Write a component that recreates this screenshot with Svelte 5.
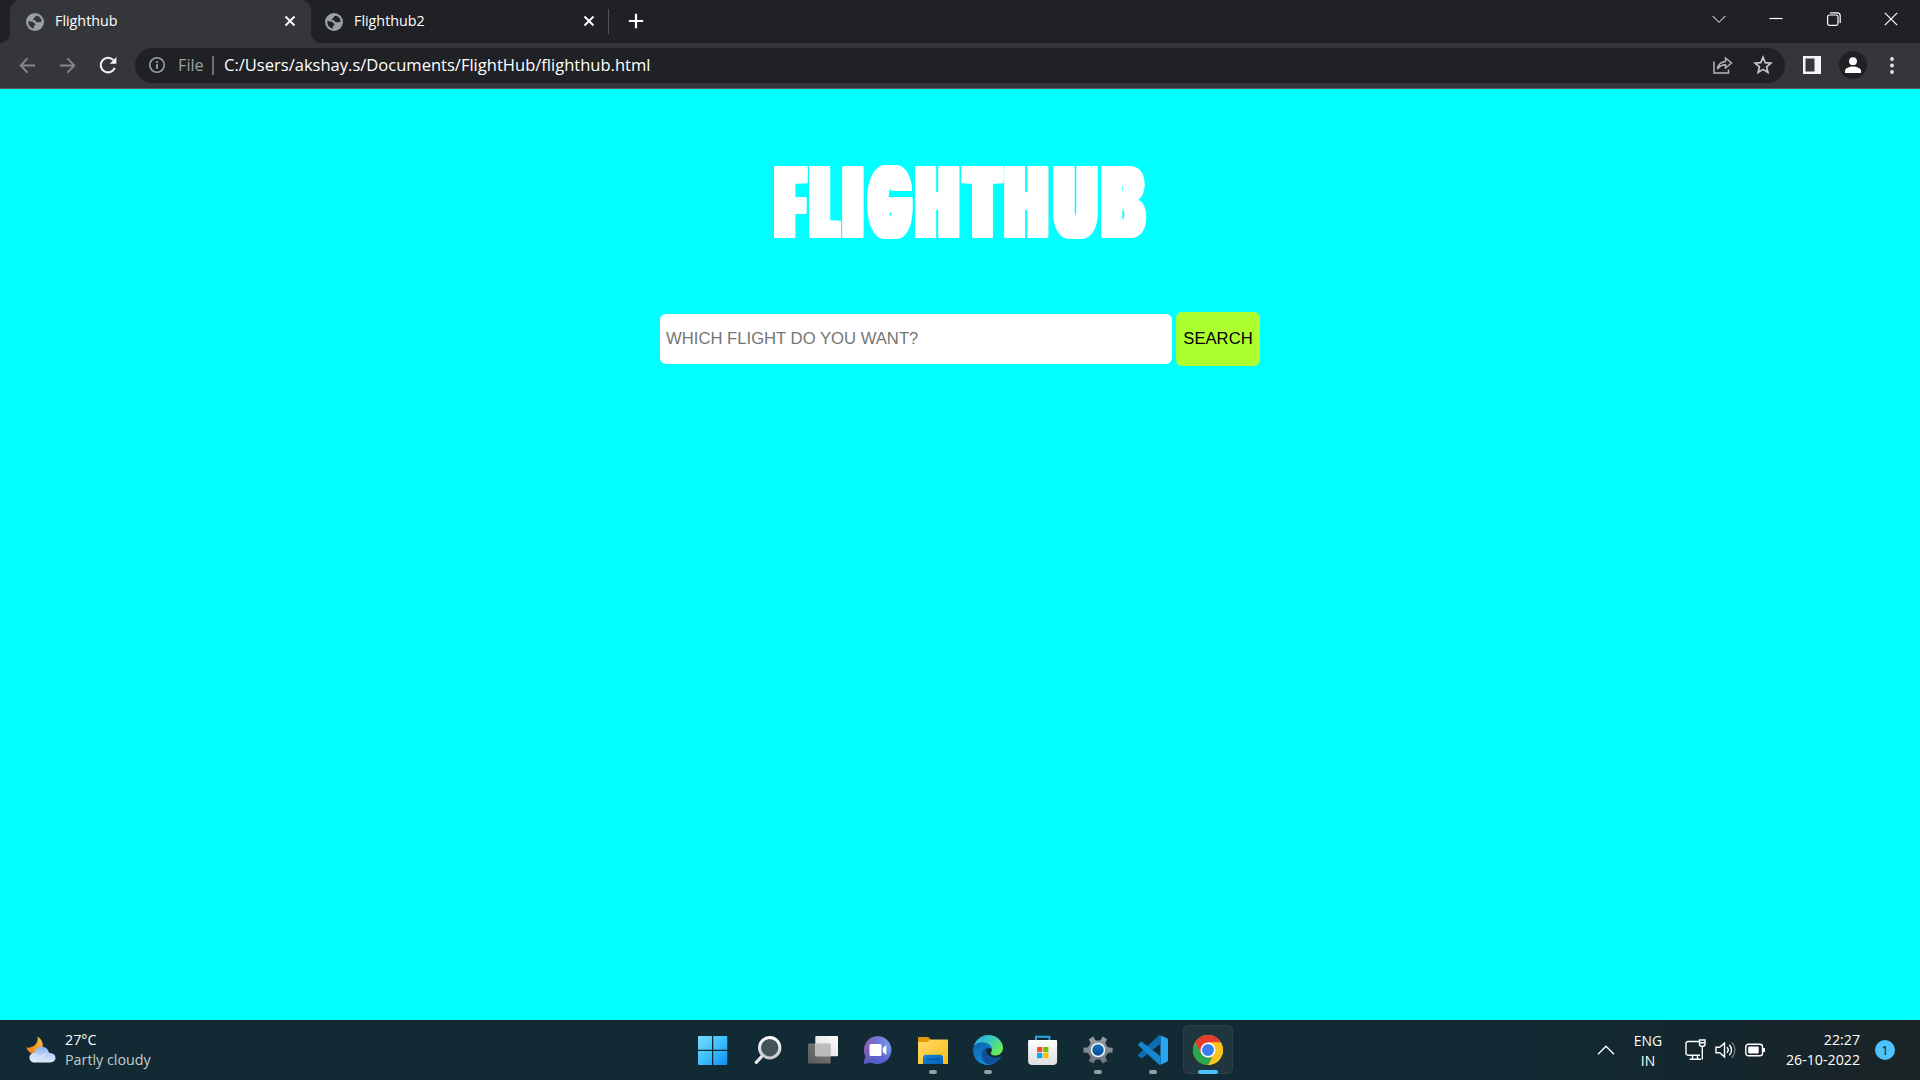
<script>
  // Each glyph of the wordmark: cell width, gap after it, left bearing,
  // horizontal scale and extra stem weight.
  const title = [
    { ch: 'F', w: 33.8, gap: 1, l: 4.2, s: 0.397, t: 13.2 },
    { ch: 'L', w: 32, gap: 0.9, l: 4.2, s: 0.372, t: 13.5 },
    { ch: 'I', w: 21.7, gap: 3.4, l: 4.2, s: 0.504, t: 11 },
    { ch: 'G', w: 45.3, gap: 3.2, l: 2.8, s: 0.504, t: 10.7 },
    { ch: 'H', w: 44.7, gap: 0.9, l: 4.2, s: 0.504, t: 10.9 },
    { ch: 'T', w: 42.5, gap: 0.6, l: 1.8, s: 0.498, t: 10.7 },
    { ch: 'H', w: 44.7, gap: 4, l: 4.2, s: 0.504, t: 10.9 },
    { ch: 'U', w: 44.7, gap: 3.4, l: 4, s: 0.54, t: 10.5 },
    { ch: 'B', w: 45.5, gap: 0, l: 4.2, s: 0.6, t: 8.9 }
  ].map((g) => ({ ...g, s: g.s / 0.96, l: g.l * 0.96 }));
  const tabs = [
    { name: 'Flighthub', active: true },
    { name: 'Flighthub2', active: false }
  ];
</script>

{#snippet globe()}
  <svg class="globe" viewBox="0 0 20 20"><circle cx="10" cy="10" r="10" fill="#9aa0a6" /><path class="land" d="M9 5.600l1.800-2.400 2-.2c2.700 1 4.500 3.600 4.600 6.400l-2.200.8h-3.600L10.300 8l-3-.3zM2.600 9l5 .7 2.600 2.200.3 1.300-1.900 1.400.2 2.700C5 16.800 2.400 13.800 2.600 9z" /></svg>
{/snippet}

<div class="screen">
  <header class="tabstrip">
    {#each tabs as tab}
      <div class="tab" class:active={tab.active}>
        {@render globe()}
        <span class="tabname">{tab.name}</span>
        <svg class="x" viewBox="0 0 12 12"><path d="M1.500 1.500l9 9M10.500 1.500l-9 9" stroke="#fff" stroke-width="1.900" /></svg>
      </div>
    {/each}
    <div class="sep"></div>
    <svg class="plus" viewBox="0 0 16 16"><path d="M8 .8v14.400M.8 8h14.400" stroke="#fff" stroke-width="2.200" /></svg>
    <div class="winctl">
      <svg class="thin" viewBox="0 0 14 14"><path d="M.7 4l6.300 6.300L13.300 4" /></svg>
      <svg viewBox="0 0 14 14"><path d="M.5 6.500h13" /></svg>
      <svg viewBox="0 0 14 14"><rect x=".6" y="3" width="10.400" height="10.400" rx="1.800" /><path d="M3 .9h7.300a2.900 2.900 0 0 1 2.900 2.900v7.300" /></svg>
      <svg viewBox="0 0 14 14"><path d="M.8.800l12.400 12.400M13.200.800L.8 13.200" /></svg>
    </div>
  </header>

  <div class="toolbar">
    <svg class="nav" viewBox="0 0 18 18"><path d="M17 9H2M9 1.500L1.800 9 9 16.500" stroke="#85878a" /></svg>
    <svg class="nav" viewBox="0 0 18 18"><path d="M1 9h15M9 1.500L16.200 9 9 16.500" stroke="#85878a" /></svg>
    <svg class="nav reload" viewBox="0 0 18 18"><path d="M15.800 11.800A7.300 7.300 0 1 1 14.300 4" stroke="#f1f3f4" stroke-width="2.100" /><path d="M17.400 1v6.700h-6.700z" fill="#f1f3f4" /></svg>
    <div class="omnibox">
      <svg class="info" viewBox="0 0 16 16"><circle cx="8" cy="8" r="7.200" fill="none" stroke="#9aa0a6" stroke-width="1.600" /><path d="M8 7.200v4.600M8 4.200V6" stroke="#9aa0a6" stroke-width="1.900" /></svg>
      <span class="file">File</span>
      <span class="bar"></span>
      <span class="url">C:/Users/akshay.s/Documents/FlightHub/flighthub.html</span>
      <svg class="share" viewBox="0 0 20 18"><path d="M1 5.500V17h14.500v-3.500M4.500 13C5 8.500 8 6 12.500 5.500V2l6 5-6 5V8.700C9 8.700 6.500 10 4.500 13z" fill="none" stroke="#b4b6b9" stroke-width="1.500" /></svg>
      <svg class="star" viewBox="0 0 20 20"><path d="M10 2.300l2.200 5.300 5.700.5-4.300 3.700 1.300 5.600-4.900-3-4.900 3 1.300-5.600L2.100 8.100l5.700-.5z" fill="none" stroke="#c4c6c9" stroke-width="1.700" /></svg>
    </div>
    <svg class="panel" viewBox="0 0 18 18"><path fill="#f1f3f4" fill-rule="evenodd" d="M0 0h18v18H0zM2.500 2.500v13h9v-13z" /></svg>
    <div class="avatar"><svg viewBox="0 0 16 16"><circle cx="8" cy="4.200" r="3.900" fill="#fff" /><path d="M0 16v-2c0-2.800 4.500-4.400 8-4.400s8 1.600 8 4.400v2z" fill="#fff" /></svg></div>
    <svg class="dots" viewBox="0 0 4 17" fill="#e3e4e6"><circle cx="2" cy="2" r="1.900" /><circle cx="2" cy="8.500" r="1.900" /><circle cx="2" cy="15" r="1.900" /></svg>
  </div>

  <main>
    <h1>{#each title as g}<span class="cell" style="width:{g.w}px;margin-right:{g.gap}px"><span class="glyph" style="--s:{g.s};--x:{g.t / 2 - g.l * g.s}px;--e:{g.t / 2 / g.s}px">{g.ch}</span></span>{/each}</h1>
    <div class="search">
      <input type="text" placeholder="WHICH FLIGHT DO YOU WANT?" />
      <button>SEARCH</button>
    </div>
  </main>

  <footer>
    <div class="weather">
      <svg viewBox="0 0 30 28">
        <defs>
          <linearGradient id="moon" x1="0" y1="1" x2="1" y2="0"><stop offset="0" stop-color="#f07b1d" /><stop offset="1" stop-color="#f9c23c" /></linearGradient>
          <linearGradient id="cloud" x1="0" y1="0" x2="0" y2="1"><stop offset="0" stop-color="#8fb4ee" /><stop offset="1" stop-color="#dde8fb" /></linearGradient>
        </defs>
        <path d="M11.500.5c4 2.500 6.200 6.800 5 11.500-1 3.500-4 6-7.500 6C5 18 1.500 15.500.5 11.500 6.500 12.500 13 8 11.500.5z" fill="url(#moon)" />
        <path d="M9 26.500c-3.200 0-5.500-2-5.500-4.800 0-2.900 2.200-4.900 5-4.900.8-3.600 3.600-6 7.300-6 3.900 0 6.800 2.500 7.300 6.300 3.700-.1 6.400 1.700 6.400 4.700 0 2.800-2.300 4.700-5.500 4.700z" fill="url(#cloud)" />
        <path d="M9 26.500c-3.200 0-5.500-2-5.500-4.800 0-2.500 2-4.500 4.500-4.700 3 0 5 2 6 3 2-2.500 6-3 9-2.900" fill="#e8f0ff" opacity=".4" />
      </svg>
      <div><p>27°C</p><p class="dim">Partly cloudy</p></div>
    </div>

    <div class="apps">
      <div class="app">
        <svg viewBox="0 0 30 30"><defs><linearGradient id="win" gradientUnits="userSpaceOnUse" x1="0" y1="0" x2="30" y2="30"><stop offset="0" stop-color="#7bdcff" /><stop offset=".5" stop-color="#3fc0fb" /><stop offset="1" stop-color="#0a8cf5" /></linearGradient></defs><path fill="url(#win)" d="M0 1.700a.8.8 0 0 1 .8-.8h13.200v13.800H0zM15.300.9h13.200a.8.8 0 0 1 .8.8v13H15.300zM0 16h14v13.900H.8a.8.8 0 0 1-.8-.8zM15.300 16h14v13.100a.8.8 0 0 1-.8.800H15.300z" /></svg>
      </div>
      <div class="app">
        <svg viewBox="0 0 30 30"><defs><linearGradient id="lens" x1="0" y1="0" x2="0" y2="1"><stop offset="0" stop-color="#fff" /><stop offset="1" stop-color="#c4c8ca" /></linearGradient></defs><path d="M10 20L3.300 27.400" stroke="#e2e4e5" stroke-width="3.200" stroke-linecap="round" /><circle cx="16.700" cy="12.700" r="10.200" fill="#42545b" stroke="url(#lens)" stroke-width="3" /></svg>
      </div>
      <div class="app">
        <svg viewBox="0 0 30 30"><defs><linearGradient id="tv1" x1="0" y1="1" x2="1" y2="0"><stop offset="0" stop-color="#d8d8d8" /><stop offset="1" stop-color="#fff" /></linearGradient><linearGradient id="tv2" x1="0" y1="1" x2="1" y2="0"><stop offset="0" stop-color="#5a5a5a" /><stop offset="1" stop-color="#7e7e7e" /></linearGradient></defs><rect x="0" y="8.500" width="22.700" height="20" rx="1" fill="url(#tv2)" /><rect x="7.300" y="1" width="22.700" height="20.300" rx="1" fill="url(#tv1)" /><path d="M7.300 8.500h14.400a1 1 0 0 1 1 1v11.800H8.300a1 1 0 0 1-1-1z" fill="#bcbcbc" /></svg>
      </div>
      <div class="app">
        <svg viewBox="0 0 30 30"><defs><linearGradient id="chat" x1=".1" y1=".3" x2="1" y2=".2"><stop offset="0" stop-color="#8a5fb5" /><stop offset=".5" stop-color="#7377d8" /><stop offset="1" stop-color="#6fa0ea" /></linearGradient><linearGradient id="chat2" x1="0" y1="0" x2="0" y2="1"><stop offset=".4" stop-color="#5059c9" stop-opacity="0" /><stop offset="1" stop-color="#5059c9" /></linearGradient></defs><path d="M14.800.9a14 14 0 1 1-6.500 26.600L.8 28.800l1.600-7.500A14 14 0 0 1 14.800.9z" fill="url(#chat)" /><path d="M14.800.9a14 14 0 1 1-6.500 26.600L.8 28.800l1.600-7.500A14 14 0 0 1 14.800.9z" fill="url(#chat2)" /><rect x="6.500" y="9" width="12" height="12" rx="1.500" fill="#fff" /><path d="M19.800 13.200l2.700-2.700c.4-.4.900-.2.900.4v8.200c0 .6-.5.800-.9.400l-2.700-2.700z" fill="#fff" /></svg>
      </div>
      <div class="app">
        <svg viewBox="0 0 30 30"><defs><linearGradient id="fold" x1="0" y1="0" x2="1" y2="1"><stop offset="0" stop-color="#ffda6b" /><stop offset="1" stop-color="#fbbd16" /></linearGradient><linearGradient id="foldb" x1="0" y1="0" x2="1" y2="1"><stop offset="0" stop-color="#1583d8" /><stop offset="1" stop-color="#0563b5" /></linearGradient></defs><path d="M0 3a1 1 0 0 1 1-1h8.500c.6 0 1 .2 1.400.6L13 5v6H0z" fill="#e09c06" /><path d="M0 7h8.500c.8 0 1.300-.3 1.800-.8l1.200-1c.4-.4.900-.6 1.500-.6h16a1 1 0 0 1 1 1v23a.5.5 0 0 1-.5.500H.5A.5.5 0 0 1 0 28.600z" fill="url(#fold)" /><path d="M5 29.100v-6.300a3 3 0 0 1 3-3h14a3 3 0 0 1 3 3v6.300z" fill="url(#foldb)" /><path d="M9 24.300h12" stroke="#084e91" stroke-width="1.200" /></svg>
        <i></i>
      </div>
      <div class="app">
        <svg viewBox="0 0 30 30"><defs><linearGradient id="e1" x1="0" y1="0" x2="1" y2=".6"><stop offset="0" stop-color="#2aa5dc" /><stop offset=".5" stop-color="#35c8c6" /><stop offset="1" stop-color="#6aeb55" /></linearGradient><linearGradient id="e2" x1="0" y1="0" x2=".5" y2="1"><stop offset="0" stop-color="#0d62ad" /><stop offset="1" stop-color="#148be0" /></linearGradient></defs><path d="M.5 12C2 5 8 0 15 0c9 0 15 6.300 15 12.800 0 4.700-3.300 7.700-7.500 7.700-3.300 0-5.200-1.200-4.500-2.700.5-1 1-2 .8-3.600C18.300 10 14 8.500 9.500 8.500 5 8.500 1.500 10 .5 12z" fill="url(#e1)" /><path d="M0 15C0 10 4.500 7.300 9.500 7.300c5.300 0 9 3 9.300 6.700-2-2-7-1.500-7.800 3.500-.8 5.500 5 10 10.500 10.500-2 1.400-4.300 2-6.500 2C6 30 0 23.500 0 15z" fill="url(#e2)" /><path d="M15.500 11.800C11 13 8 16.500 8.500 21c.4 4.500 4 8.500 9 8.700 4.700-.6 8.500-3.700 10.700-7.700.3-.6-.2-.9-.8-.6-1.400.7-3 1-4.900 1-5 0-9.500-2.900-9.500-6.500 0-1.500 1-3 2.500-4.100z" fill="#10509c" /></svg>
        <i></i>
      </div>
      <div class="app">
        <svg viewBox="0 0 30 30"><defs><linearGradient id="bag" x1="0" y1="0" x2="0" y2="1"><stop offset="0" stop-color="#fff" /><stop offset="1" stop-color="#dedede" /></linearGradient></defs><path d="M7.900 7V1.800h13.500V7" fill="none" stroke="#2aa9e6" stroke-width="1.900" /><path d="M.1 6a1 1 0 0 1 1-1h27a1 1 0 0 1 1 1v20a4 4 0 0 1-4 4h-21a4 4 0 0 1-4-4z" fill="url(#bag)" /><path d="M9.100 12h5.200v5.200H9.100z" fill="#f25022" /><path d="M15.200 12h5.200v5.200h-5.200z" fill="#7fba00" /><path d="M9.100 18h5.200v5.200H9.100z" fill="#00a4ef" /><path d="M15.200 18h5.200v5.200h-5.200z" fill="#ffb900" /></svg>
      </div>
      <div class="app">
        <svg viewBox="0 0 30 30"><defs><linearGradient id="gear" x1="0" y1="0" x2="0" y2="1"><stop offset="0" stop-color="#99a0a6" /><stop offset="1" stop-color="#6b737a" /></linearGradient><linearGradient id="gearb" x1="0" y1="0" x2="0" y2="1"><stop offset="0" stop-color="#1a74c9" /><stop offset="1" stop-color="#04468f" /></linearGradient></defs><path d="M10.400 1.600l1.700 3.200c.3.500.8.700 1.300.6h3.200c.5.100 1-.1 1.300-.6l1.700-3.200 4.500 2.600-1.600 3.400c-.2.500-.1 1 .2 1.400l1.800 2.700c.3.400.8.700 1.300.7l3.800.3v4.800l-3.700.3c-.5 0-1 .3-1.300.7l-1.800 2.800c-.3.500-.4 1-.2 1.500l1.700 3.100-4.700 2.600-1.800-3.200c-.3-.5-.7-.7-1.200-.7h-3.200c-.5 0-.9.200-1.200.7l-1.800 3.200-4.700-2.600 1.700-3.100c.2-.5.100-1-.2-1.500l-1.800-2.800c-.3-.4-.8-.7-1.300-.7L.4 17.500v-4.800l3.700-.3c.5 0 1-.3 1.300-.7l1.800-2.700c.3-.4.400-.9.200-1.400L5.800 4.200z" fill="url(#gear)" /><circle cx="15" cy="15" r="6.500" fill="url(#gearb)" stroke="#f0f2f3" stroke-width="1.600" /></svg>
        <i></i>
      </div>
      <div class="app">
        <svg viewBox="0 0 30 30"><path d="M22.500.2L29 3.200c.6.300 1 .8 1 1.500v20.600c0 .7-.4 1.200-1 1.500l-6.500 3z" fill="#2aa6f0" /><path d="M22.500.2v8.600L4.200 22.900c-.5.400-1.100.4-1.600 0l-2-1.800c-.6-.5-.6-1.400 0-1.900L20.800.6c.5-.4 1.100-.6 1.700-.4z" fill="#0a6db5" /><path d="M22.500 29.800v-8.600L4.200 7.100c-.5-.4-1.100-.4-1.600 0l-2 1.800c-.6.500-.6 1.400 0 1.900l20.200 18.600c.5.400 1.100.6 1.700.4z" fill="#1487cf" /></svg>
        <i></i>
      </div>
      <div class="app current">
        <svg viewBox="0 0 30 30"><circle cx="15" cy="15" r="15" fill="#fcc31e" /><path d="M2 7.500A15 15 0 0 1 28 7.500H15l-6.500 11.300z" fill="#e33b2e" /><path d="M2 7.500l6.500 11.200L15 22.500h6.500L15 30A15 15 0 0 1 2 7.500z" fill="#2da44e" /><path d="M21.500 18.700L15 30a15 15 0 0 0 13-22.500H15z" fill="#fcc31e" /><circle cx="15" cy="15" r="7.500" fill="#fff" /><circle cx="15" cy="15" r="6" fill="#3b7ded" /></svg>
        <i></i>
      </div>
    </div>

    <div class="tray">
      <svg class="up" viewBox="0 0 18 10"><path d="M1 9.200l8-8 8 8" /></svg>
      <div class="lang"><p>ENG</p><p>IN</p></div>
      <svg class="net" viewBox="0 0 22 22"><path d="M14 2.500H3A2 2 0 0 0 1 4.500v9.700a2 2 0 0 0 2 2h12M7.500 16.500v3.300M12.500 16.500v3.300M4.500 20.300h11.500" /><path d="M14.500 1h5.500v4.200a2 2 0 0 1-2 2h-1.500a2 2 0 0 1-2-2zM14.500 3.800H20M17.300 7.500v13" /></svg>
      <svg class="vol" viewBox="0 0 22 20"><path d="M1 7.200v5.600h3.700L9.500 17V3L4.700 7.200zM12 7.300a4 4 0 0 1 0 5.400M14.300 4.700a7.500 7.500 0 0 1 0 10.600" /><path d="M16.700 2.300a11 11 0 0 1 0 15.400" opacity=".35" /></svg>
      <svg class="bat" viewBox="0 0 22 14"><rect x=".8" y="1.200" width="16.700" height="11.600" rx="2.600" /><rect x="3.200" y="3.600" width="10.500" height="6.800" rx=".8" fill="#fff" stroke="none" /><path d="M18.800 5v4" stroke-width="2.400" /></svg>
      <div class="clock"><p>22:27</p><p>26-10-2022</p></div>
      <div class="badge">1</div>
    </div>
  </footer>
</div>

<style>
  :global(body) { margin: 0; }
  .screen { width: 1920px; height: 1080px; display: flex; flex-direction: column; overflow: hidden; font-family: "Open Sans", "Noto Sans", sans-serif; color: #fff; background: #35363a; }
  svg { display: block; flex: none; overflow: visible; }
  p { margin: 0; }

  .tabstrip { height: 43px; background: #202124; display: flex; align-items: center; padding-left: 10px; }
  .tab { height: 43px; width: 301px; box-sizing: border-box; padding: 0 15px 0 16px; display: flex; align-items: center; position: relative; --land: #202124; }
  .tab:not(.active) { width: 297px; padding: 0 13px 0 14px; }
  .tab.active { background: #35363a; border-radius: 10px 10px 0 0; --land: #35363a; }
  .tab.active::before, .tab.active::after { content: ""; position: absolute; bottom: 0; width: 10px; height: 10px; }
  .tab.active::before { left: -10px; background: radial-gradient(circle at 0 0, #202124 9.600px, #35363a 10.200px); }
  .tab.active::after { right: -10px; background: radial-gradient(circle at 100% 0, #202124 9.600px, #35363a 10.200px); }
  .globe { width: 18px; height: 18px; }
  .land { fill: var(--land); }
  .tabname { flex: 1; margin-left: 11px; font-size: 14.300px; line-height: 20px; padding-bottom: 2px; }
  .x { width: 12px; height: 12px; margin-bottom: 1px; }
  .sep { width: 1px; height: 25px; background: #505255; }
  .plus { width: 16px; height: 16px; margin-left: 19px; margin-bottom: 1px; }
  .winctl { margin-left: auto; display: flex; gap: 43.300px; padding: 0 22px 6px 0; }
  .winctl svg { width: 14px; height: 14px; fill: none; stroke: #fff; stroke-width: 1.200; }
  .winctl .thin { stroke: #b9babb; stroke-width: 1.100; }

  .toolbar { height: 46px; flex: none; box-sizing: border-box; border-bottom: 1px solid #55575b; background: #35363a; display: flex; align-items: center; padding: 0 26px 1px 19px; }
  .nav { width: 17px; height: 17px; margin-right: 23px; fill: none; stroke-width: 2; }
  .reload { margin-right: 18px; width: 18px; height: 18px; }
  .omnibox { width: 1650px; height: 35px; border-radius: 18px; background: #202124; display: flex; align-items: center; box-sizing: border-box; padding: 0 12px 0 14px; }
  .info { width: 16px; height: 16px; }
  .file { font-size: 16.300px; color: #9aa0a6; width: 34px; margin-left: 13px; line-height: 22px; }
  .bar { width: 2px; height: 19px; background: #6f7276; }
  .url { font-size: 16.550px; line-height: 22px; margin-left: 10px; flex: 1; white-space: nowrap; }
  .share { width: 20px; height: 18px; margin-right: 20px; }
  .star { width: 20px; height: 20px; }
  .panel { width: 18px; height: 18px; margin-left: 18px; }
  .avatar { width: 28px; height: 28px; border-radius: 50%; background: #202124; margin-left: 18px; display: flex; align-items: center; justify-content: center; }
  .avatar svg { width: 16px; height: 16px; }
  .dots { width: 4px; height: 17px; margin-left: auto; }

  main { height: 931px; flex: none; background: #0ff; display: flex; flex-direction: column; align-items: center; }
  h1 { margin: 63px 0 0; height: 100px; display: flex; font: 900 96px/100px Inter, sans-serif; color: #fff; }
  .cell { flex: none; height: 100px; }
  .glyph { display: block; width: 0; white-space: nowrap; transform-origin: 0 0; transform: translateX(var(--x)) scaleX(var(--s)); --n: calc(var(--e) * -1); --h: calc(var(--e) / 2); --m: calc(var(--e) / -2); text-shadow: var(--e) 1.400px #fff, var(--e) -1.400px #fff, var(--n) 1.400px #fff, var(--n) -1.400px #fff, var(--h) 1.400px #fff, var(--h) -1.400px #fff, var(--m) 1.400px #fff, var(--m) -1.400px #fff, 0 1.400px #fff, 0 -1.400px #fff; }
  .search { display: flex; align-items: center; gap: 4px; margin-top: 60px; }
  input { width: 512px; height: 50px; box-sizing: border-box; border: 0; border-radius: 6px; padding: 0 6px; background: #fff; font: 16.670px "Liberation Sans", Arial, sans-serif; }
  input::placeholder { color: #757575; opacity: 1; }
  button { width: 84px; height: 54px; border: 0; border-radius: 6px; padding: 0; background: #adff2f; color: #000; font: 16.670px "Liberation Sans", Arial, sans-serif; }

  footer { height: 60px; flex: none; display: grid; grid-template-columns: 685px 550px 685px; background: linear-gradient(90deg, #122a33 0, #122a33 80%, #14262d 90%, #1c2325 100%); font-size: 14.300px; }
  .weather { display: flex; align-items: center; padding: 0 0 0 26px; gap: 9px; }
  .weather svg { width: 30px; height: 28px; }
  .weather p { line-height: 20px; }
  .dim { color: #c5cbcd; }
  .apps { display: flex; }
  .app { width: 50px; height: 49px; box-sizing: border-box; margin: 5px 2.500px 0; display: flex; flex-direction: column; align-items: center; padding-top: 10px; border-radius: 6px; }
  .app svg { width: 30px; height: 30px; }
  .app i { width: 8px; height: 4px; border-radius: 2px; background: #969fa3; margin-top: 5px; }
  .current { background: #20363f; box-shadow: inset 0 0 0 1px #2b4048; }
  .current i { width: 20px; background: #4cc2ff; }
  .tray { display: flex; align-items: center; padding-left: 362px; }
  .tray svg { fill: none; stroke: #fff; stroke-width: 1.400; }
  .tray .up { width: 18px; height: 10px; }
  .lang { width: 40px; margin-left: 13px; text-align: center; }
  .lang p, .clock p { line-height: 20px; }
  .lang { font-size: 13.900px; padding-top: 1px; }
  .net { width: 22px; height: 22px; margin-left: 17px; }
  .vol { width: 22px; height: 20px; margin-left: 8px; }
  .bat { width: 22px; height: 14px; margin-left: 8px; }
  .clock { width: 90px; text-align: right; margin-left: 3px; font-size: 14.200px; padding-bottom: 1px; }
  .badge { width: 20px; height: 20px; border-radius: 50%; background: #4cc2ff; color: #10222b; font-size: 13px; line-height: 20px; text-align: center; margin-left: 15px; }
</style>
